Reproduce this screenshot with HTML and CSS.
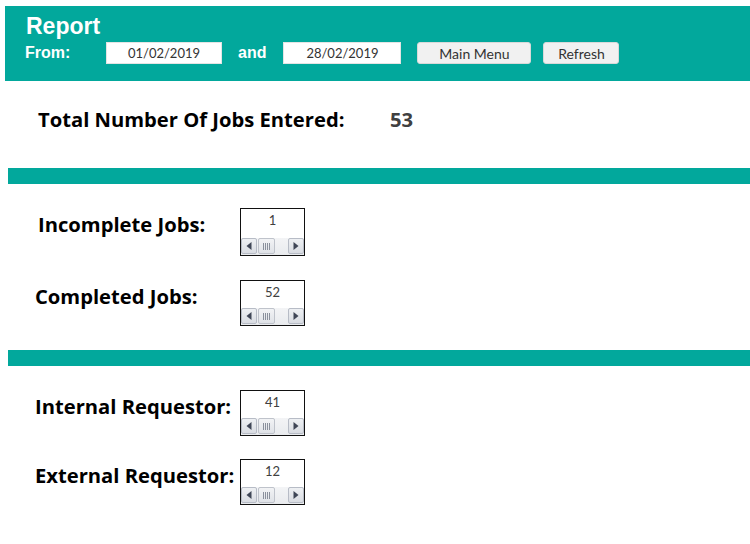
FILE: index.html
```html
<!DOCTYPE html>
<html>
<head>
<meta charset="utf-8">
<title>Report</title>
<link rel="stylesheet" href="styles.css">
</head>
<body>
<header class="header">
  <div class="title">Report</div>
  <div class="filter">
    <span class="from">From:</span>
    <span class="date date-start">01/02/2019</span>
    <span class="and">and</span>
    <span class="date date-end">28/02/2019</span>
    <span class="btn btn-menu">Main Menu</span>
    <span class="btn btn-refresh">Refresh</span>
  </div>
</header>

<section class="total">
  <span class="total-label">Total Number Of Jobs Entered:</span>
  <span class="total-value">53</span>
</section>

<div class="band"></div>

<section class="group">
  <div class="row row-indent">
    <span class="label">Incomplete Jobs:</span>
    <div class="spin spin-tall">
      <div class="spin-value">1</div>
      <div class="scroll">
        <span class="sbtn"><svg width="6" height="8" viewBox="0 0 6 8"><path d="M5.5 0 L0.5 4 L5.5 8 Z" fill="#3f4656"/></svg></span>
        <span class="thumb"><i></i><i></i><i></i><i></i></span>
        <span class="track"></span>
        <span class="sbtn"><svg width="6" height="8" viewBox="0 0 6 8"><path d="M0.5 0 L5.5 4 L0.5 8 Z" fill="#3f4656"/></svg></span>
      </div>
    </div>
  </div>
  <div class="row">
    <span class="label">Completed Jobs:</span>
    <div class="spin">
      <div class="spin-value">52</div>
      <div class="scroll">
        <span class="sbtn"><svg width="6" height="8" viewBox="0 0 6 8"><path d="M5.5 0 L0.5 4 L5.5 8 Z" fill="#3f4656"/></svg></span>
        <span class="thumb"><i></i><i></i><i></i><i></i></span>
        <span class="track"></span>
        <span class="sbtn"><svg width="6" height="8" viewBox="0 0 6 8"><path d="M0.5 0 L5.5 4 L0.5 8 Z" fill="#3f4656"/></svg></span>
      </div>
    </div>
  </div>
</section>

<div class="band"></div>

<section class="group group-tight">
  <div class="row">
    <span class="label">Internal Requestor:</span>
    <div class="spin">
      <div class="spin-value">41</div>
      <div class="scroll">
        <span class="sbtn"><svg width="6" height="8" viewBox="0 0 6 8"><path d="M5.5 0 L0.5 4 L5.5 8 Z" fill="#3f4656"/></svg></span>
        <span class="thumb"><i></i><i></i><i></i><i></i></span>
        <span class="track"></span>
        <span class="sbtn"><svg width="6" height="8" viewBox="0 0 6 8"><path d="M0.5 0 L5.5 4 L0.5 8 Z" fill="#3f4656"/></svg></span>
      </div>
    </div>
  </div>
  <div class="row">
    <span class="label">External Requestor:</span>
    <div class="spin">
      <div class="spin-value">12</div>
      <div class="scroll">
        <span class="sbtn"><svg width="6" height="8" viewBox="0 0 6 8"><path d="M5.5 0 L0.5 4 L5.5 8 Z" fill="#3f4656"/></svg></span>
        <span class="thumb"><i></i><i></i><i></i><i></i></span>
        <span class="track"></span>
        <span class="sbtn"><svg width="6" height="8" viewBox="0 0 6 8"><path d="M0.5 0 L5.5 4 L0.5 8 Z" fill="#3f4656"/></svg></span>
      </div>
    </div>
  </div>
</section>
</body>
</html>
```

FILE: styles.css
```css
* { box-sizing: border-box; }

body {
  margin: 0;
  background: #ffffff;
  font-family: "Open Sans", "Liberation Sans", sans-serif;
  color: #000;
}

.header {
  margin: 6px 0 0 5px;
  height: 75px;
  background: #02a89c;
  padding: 7px 0 0 20px;
  display: flex;
  flex-direction: column;
  gap: 3px;
}

.title {
  font-family: "Liberation Sans", Arial, sans-serif;
  font-weight: bold;
  font-size: 23px;
  line-height: 26px;
  color: #fff;
  padding-left: 1px;
}

.filter {
  display: flex;
  align-items: center;
  height: 22px;
}

.from, .and {
  font-family: "Liberation Sans", Arial, sans-serif;
  font-weight: bold;
  font-size: 16px;
  color: #fff;
}

.from { width: 81px; }
.and { margin: 0 17px 0 16px; }

.date {
  height: 22px;
  background: #fff;
  border: 1px solid #e4e4e4;
  color: #333;
  font-family: "Lato", sans-serif;
  font-size: 13px;
  display: flex;
  align-items: center;
  justify-content: center;
}
.date-start { width: 116px; }
.date-end { width: 118px; }

.btn {
  height: 22px;
  background: #f1f1f1;
  border: 1px solid #d9d9d9;
  border-radius: 3px;
  color: #333;
  font-family: "Lato", sans-serif;
  font-size: 14px;
  display: flex;
  align-items: center;
  justify-content: center;
}
.btn-menu { width: 114px; margin-left: 16px; }
.btn-refresh { width: 76px; margin-left: 12px; }

.total {
  padding: 26px 0 0 38px;
  height: 87px;
  display: flex;
  align-items: flex-start;
  font-weight: bold;
  font-size: 20.2px;
  line-height: 24px;
}
.total-label { width: 352px; }
.total-value { color: #404040; }

.band {
  margin-left: 8px;
  height: 16px;
  background: #02a89c;
}

.group {
  padding: 24px 0 24px 35px;
  display: flex;
  flex-direction: column;
  gap: 24px;
}
.group-tight { gap: 23px; }

.row {
  display: flex;
  align-items: flex-start;
}
.row-indent { padding-left: 3px; }
.row-indent .label { width: 202px; }

.label {
  width: 205px;
  font-weight: bold;
  font-size: 20.2px;
  line-height: 24px;
  padding-top: 4px;
  white-space: nowrap;
}

.spin {
  width: 65px;
  height: 46px;
  border: 1px solid #111;
  background: #fff;
  display: flex;
  flex-direction: column;
}
.spin-tall { height: 48px; }

.spin-value {
  flex: 1;
  text-align: center;
  font-family: "Lato", sans-serif;
  font-size: 13px;
  line-height: 15px;
  padding-top: 4px;
  color: #404040;
}

.scroll {
  height: 17px;
  display: flex;
  background: linear-gradient(#f3f4f6, #e9ebee);
  padding: 0 0 1px 0;
}

.sbtn {
  width: 16px;
  border: 1px solid #b7bcc6;
  border-radius: 2px;
  background: linear-gradient(#eef0f3, #d9dce2);
  display: flex;
  align-items: center;
  justify-content: center;
}

.thumb {
  width: 17px;
  margin-left: 1px;
  border: 1px solid #bfc3cb;
  border-radius: 2px;
  background: linear-gradient(#f2f3f5, #dfe2e7);
  display: flex;
  align-items: center;
  justify-content: center;
  gap: 1px;
}
.thumb i {
  width: 1px;
  height: 7px;
  background: #8a909c;
}

.track { flex: 1; }
```
